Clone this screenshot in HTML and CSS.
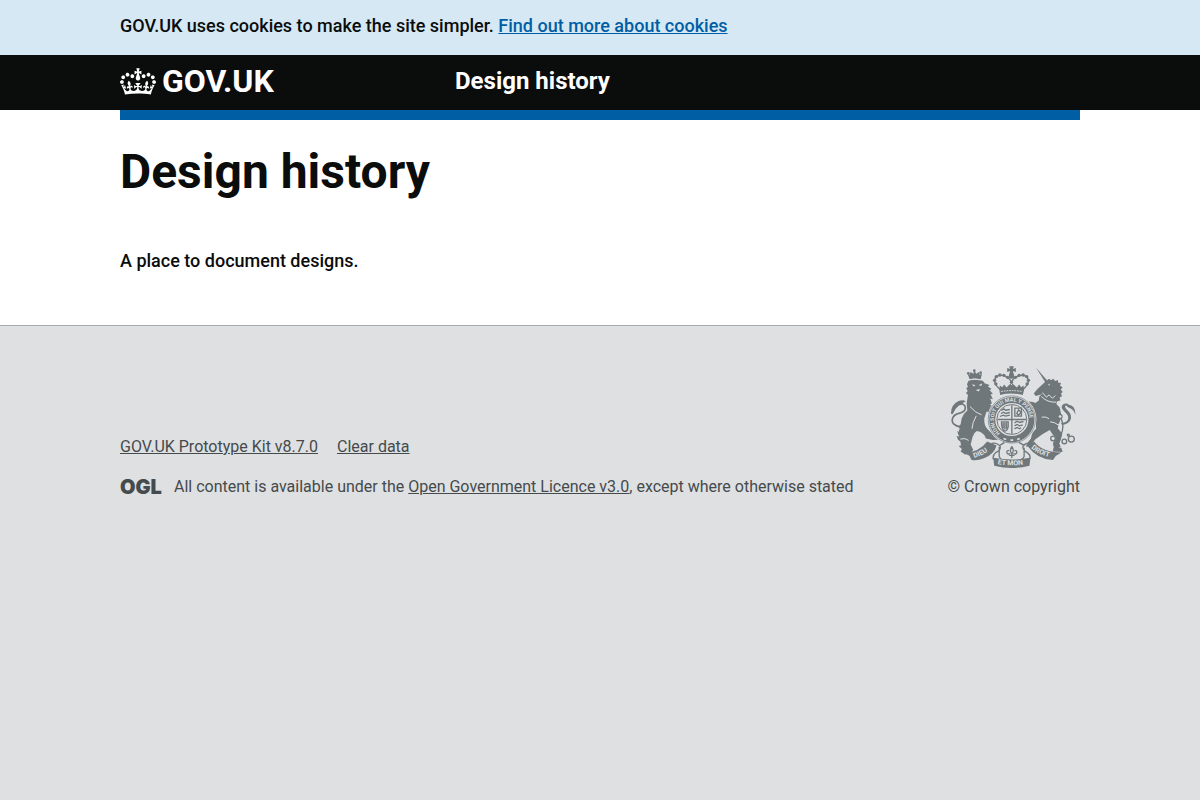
FILE: index.html
```html
<!DOCTYPE html>
<html lang="en">
<head>
<meta charset="utf-8">
<meta name="viewport" content="width=device-width, initial-scale=1">
<title>Design history</title>
<link rel="stylesheet" href="styles.css">
</head>
<body>
<div class="cookie-banner">
  <p class="container">GOV.UK uses cookies to make the site simpler. <a class="link" href="#cookies">Find out more about cookies</a></p>
</div>
<header class="header">
  <div class="container header-row">
    <a class="logo" href="#home">
      <svg class="crown" viewBox="0 0 132 97" aria-hidden="true"><path fill="currentColor" fill-rule="evenodd" d="M25 30.2c3.5 1.5 7.7-.2 9.1-3.7 1.5-3.6-.2-7.8-3.9-9.2-3.6-1.4-7.6.3-9.1 3.9-1.4 3.5.3 7.5 3.9 9zM9 39.5c3.6 1.5 7.8-.2 9.2-3.7 1.5-3.6-.2-7.8-3.9-9.1-3.6-1.5-7.6.2-9.1 3.8-1.4 3.5.3 7.5 3.8 9zM4.4 57.2c3.5 1.5 7.7-.2 9.1-3.8 1.5-3.6-.2-7.7-3.9-9.1-3.5-1.5-7.6.3-9.1 3.8-1.4 3.5.3 7.6 3.9 9.1zm38.3-21.4c3.5 1.5 7.7-.2 9.1-3.8 1.5-3.6-.2-7.7-3.9-9.1-3.6-1.5-7.6.3-9.1 3.8-1.3 3.6.4 7.7 3.9 9.1zm64.4-5.6c-3.6 1.5-7.8-.2-9.1-3.7-1.5-3.6.2-7.8 3.8-9.2 3.6-1.4 7.7.3 9.2 3.9 1.3 3.5-.4 7.5-3.9 9zm15.9 9.3c-3.6 1.5-7.7-.2-9.1-3.7-1.5-3.6.2-7.8 3.7-9.1 3.6-1.5 7.7.2 9.2 3.8 1.5 3.5-.3 7.5-3.8 9zm4.7 17.7c-3.6 1.5-7.8-.2-9.2-3.8-1.5-3.6.2-7.7 3.9-9.1 3.6-1.5 7.7.3 9.2 3.8 1.3 3.5-.4 7.6-3.9 9.1zM89.3 35.8c-3.6 1.5-7.8-.2-9.2-3.8-1.4-3.6.2-7.7 3.9-9.1 3.6-1.5 7.7.3 9.2 3.8 1.4 3.6-.3 7.7-3.9 9.1zM69.7 17.7l8.9 4.7V9.3l-8.9 2.8c-.2-.3-.5-.6-.9-.9L72.4 0H59.6l3.5 11.2c-.3.3-.6.5-.9.9l-8.8-2.8v13.1l8.8-4.7c.3.3.6.7.9.9l-5 15.4v.1c-.2.8-.4 1.6-.4 2.4 0 4.1 3.1 7.5 7 8.1h.2c.3 0 .7.1 1 .1.4 0 .7 0 1-.1h.2c4-.6 7.1-4.1 7.1-8.1 0-.8-.1-1.7-.4-2.4V34l-5.1-15.4c.4-.2.7-.6 1-.9zM66 92.8c16.9 0 32.8 1.1 47.1 3.2 4-16.9 8.9-26.7 14-33.5l-9.6-3.4c1 4.9 1.1 7.2 0 10.2-1.5-1.4-3-4.3-4.2-8.7L108.6 76c2.8-2 5-3.2 7.5-3.3-4.4 9.4-10 11.9-13.6 11.2-4.3-.8-6.3-4.6-5.6-7.9 1-4.7 5.7-5.9 8-.5 4.3-8.7-3-11.4-7.6-8.8 7.1-7.2 7.9-13.5 2.1-21.1-8 6.1-8.1 12.3-4.5 20.8-4.7-5.4-12.1-2.5-9.5 6.2 3.4-5.2 7.9-2 7.2 3.1-.6 4.3-6.4 7.8-13.5 7.2-10.3-.9-10.9-8-11.2-13.8 2.5-.5 7.1 1.8 11 7.3L80.2 60c-4.1 4.4-8 5.3-12.3 5.4 1.4-4.4 8-11.6 8-11.6H55.5s6.4 7.2 7.9 11.6c-4.2-.1-8-1-12.3-5.4l1.4 16.4c3.9-5.5 8.5-7.7 10.9-7.3-.3 5.8-.9 12.8-11.1 13.8-7.2.6-12.9-2.9-13.5-7.2-.7-5 3.8-8.3 7.1-3.1 2.7-8.7-4.6-11.6-9.4-6.2 3.7-8.5 3.6-14.7-4.6-20.8-5.8 7.6-5 13.9 2.2 21.1-4.7-2.6-11.9.1-7.7 8.8 2.3-5.5 7.1-4.2 8.1.5.7 3.3-1.3 7.1-5.7 7.9-3.5.7-9-1.8-13.5-11.2 2.5.1 4.7 1.3 7.5 3.3l-4.7-15.4c-1.2 4.4-2.7 7.2-4.3 8.7-1.1-3-.9-5.3 0-10.2l-9.5 3.4c5 6.9 9.9 16.7 14 33.5 14.8-2.1 30.8-3.2 47.7-3.2z"/></svg>
      <span>GOV.UK</span>
    </a>
    <a class="service-name" href="#service">Design history</a>
  </div>
</header>
<main class="container main">
  <h1 class="title">Design history</h1>
  <p>A place to document designs.</p>
</main>
<footer class="footer">
  <div class="container footer-row">
    <div class="footer-meta">
      <ul class="footer-links">
        <li><a href="#kit">GOV.UK Prototype Kit v8.7.0</a></li>
        <li><a href="#clear">Clear data</a></li>
      </ul>
      <div class="licence">
        <span class="ogl">OGL</span>
        <p>All content is available under the <a href="#licence">Open Government Licence v3.0</a>, except where otherwise stated</p>
      </div>
    </div>
    <a class="copyright" href="#copyright">
      <svg class="crest" viewBox="36 33 376 307" aria-hidden="true">
        <defs>
          <path id="garter" d="M184 235A54 54 0 1 1 254 235"/>
          <path id="left" d="M106 310Q138 300 162 277"/>
          <path id="mid" d="M176 328Q219 337 268 327"/>
          <path id="right" d="M277 280Q302 303 348 310"/>
        </defs>
        <g class="ink">
          <!-- lion -->
          <path d="M92 73l-6-17 6 3 3-8 8 5 3-9 6 9 8-5 2 8 7-3-4 17q-17-5-33 0z"/>
          <circle cx="106" cy="47" r="4"/><circle cx="88" cy="55" r="4"/><circle cx="125" cy="53" r="4"/>
          <path d="M91 77q15-6 34-2 10 3 12 10l15 5-5 5 11 7-6 3 10 12-7 1 7 15-8-2 5 15-6 2q14 8 20 20l12 8-7 9-14-3q-12-10-21-12l-7 21q-1 22 10 32 8 11 19 14l9 8 5 10-17 1-21-5q-5-13-16-19l-11-3q-10 5-13 17l-6 23 7 15-4 6 7 7-27 2-13-9 5-10-5-13 0-18-8-11 5-18-4-4 7-8 3-17q4-14 17-24l-2-22 4-25-6-6 5-5-4-10 5-3-3-8 5-11z"/>
          <path d="M71 238l-17-9 7 16-8-1 4 11 14 11zM72 270l-13 4 13 12 31 2-6-12z"/>
          <path class="line" d="M66 217Q36 211 40 193q3-14 22-18 21-6 16-21-7-13-20-4-14 11-20 27" stroke-width="5"/>
          <path d="M36 177q-1-28 23-39 14-5 22 2-12 3-14 11-3-2-11 1-7 4-12 20z"/>
          <!-- unicorn -->
          <path d="M292 38l36 42-7 4z"/>
          <path d="M319 81l12-10 6 5 7-5 5 7 9-3 0 8 9 1-3 8 8 6-6 5 6 8-5 5 3 9-7 2 2 10-9 2-3 8 10 11 4 18-3 22-7 22 14 17-4 16-5 13 4 10-17 2-5-6 8-24-10-9-9-13-21 12-23 16-9 13-10 9-9-1 7-13 8-10 5-18 11-12-1-22-6-15-13-7-8 10 4 9-9 9-11-5 4-12-4-10-9-13 5-9 8-6 10-3 9-8 11 1 8 3 10-7 2-13 8-6-19 5-6-7 11-14z"/>
          <path d="M367 205q22-2 22-16 0-9-12-19-13-12-5-20 10-7 19-1-9-1-12 6 0 5 9 13 14 14 7 28-8 13-25 14zM380 149q30-4 31 31-7-16-15-19-8-1-16-12z"/>
          <path d="M346 272l22 8 4 12-30-2z"/>
        </g>
        <g class="line" stroke-width="4">
          <path d="M366 190q10 17 5 38-4 17-14 27"/>
          <circle cx="398" cy="253" r="9"/><circle cx="377" cy="260" r="7"/><circle cx="389" cy="241" r="3"/>
          <circle cx="343" cy="251" r="7"/><circle cx="352" cy="267" r="7"/><circle cx="364" cy="185" r="6"/>
        </g>
        <g class="cut">
          <path d="M99 88l11 3-6 4zM119 90l11-4-3 7zM110 105l13-3-3 8zM327 90l7-4-2 6z"/>
          <path class="cutline" d="M88 75q18-5 38 0M93 155q17 20 35 25M112 183q-12 20-13 39M64 253q15-5 25 4M311 113l12 14 8-7 10 10 9-8M308 125q17 18 45 17M309 187q13-3 22 5M334 201q15 1 24 9" stroke-width="3"/>
          <circle cx="364" cy="185" r="4"/><circle cx="362" cy="210" r="4"/>
        </g>
        <!-- crown -->
        <path class="line" d="M184 104q-21-18-16-32 6-13 22-11 20 3 28 20 8-17 28-20 16-2 22 11 5 14-16 32" stroke-width="4"/>
        <g class="ink">
          <circle cx="171" cy="87" r="5"/><circle cx="167" cy="76" r="5"/><circle cx="172" cy="65" r="5"/><circle cx="183" cy="60" r="5"/><circle cx="195" cy="61" r="5"/><circle cx="206" cy="67" r="5"/>
          <circle cx="265" cy="87" r="5"/><circle cx="269" cy="76" r="5"/><circle cx="264" cy="65" r="5"/><circle cx="253" cy="60" r="5"/><circle cx="241" cy="61" r="5"/><circle cx="230" cy="67" r="5"/>
          <path d="M211 34h14l-3 8 9-3v12l-9-3 3 12h-14l3-12-9 3V39l9 3z"/>
          <circle cx="218" cy="63" r="8"/><circle cx="218" cy="82" r="5"/>
          <path d="M181 104l2-12 7 5 6-8 7 9 12-12 3 6 3-6 13 12 7-9 6 8 7-5 2 12-4 16q-35-8-68 0z"/>
        </g>
        <path class="cutline" d="M187 110q32-6 63 0" stroke-width="3" stroke-dasharray="5 3"/>
        <!-- garter and shield -->
        <circle class="field" cx="219" cy="194" r="74"/>
        <circle class="line" cx="219" cy="194" r="59" stroke-width="18"/>
        <circle class="line" cx="219" cy="194" r="71" stroke-width="2"/>
        <circle class="line" cx="219" cy="194" r="45" stroke-width="3"/>
        <path class="line" d="M219 151v86M176 194h86" stroke-width="4"/>
        <g class="line" stroke-width="4">
          <path d="M187 167l8-5 5 4 13-2M186 176l8-4 6 4 13-3M183 185l10-4 7 3 13-3M228 160h20v24h-20zM234 176l5-11 8 7-8 9zM227 204l8-5 7 4 12-3M227 213l8-4 7 4 10-3M227 222l8-4 7 4 5-3M188 201l20 0 0 15q-3 12-10 13-11-5-10-28zM193 204v16M198 204v20M203 204v18"/>
        </g>
        <path class="line" d="M178 245q39 32 81 0M197 263l-13 8M240 263l15 8" stroke-width="4"/>
        <path class="cutline" d="M194 251l8 3M215 256h8M235 254l8-3" stroke-width="5"/>
        <!-- scroll -->
        <g class="ink">
          <path d="M76 294q44-1 69-34l28 12q-7 26-38 39-24 9-38 4l-5-11z"/>
          <path d="M286 260q23 32 82 33l-17 11-8 12q-47-2-75-40z"/>
          <path d="M163 309q54 11 112 0l-3 24q-54 14-106 0z"/>
        </g>
        <path class="line" d="M158 266q14-4 25 7 5 13-13 21-9 7-7 20M278 266q-18-3-25 8-4 10 15 22 8 6 5 16M181 277v28q2 7 7 8M256 279v26q-2 7-8 8" stroke-width="4"/>
        <path class="line" d="M219 276q9 12 0 21-9-9 0-21zM214 297q-9 3-10-4 0-7 7-5M224 297q9 3 10-4 0-7-7-5M219 297v13M211 302h16" stroke-width="4"/>
        <g class="motto">
          <text><textPath href="#garter">HONI SOIT QUI MAL Y PENSE</textPath></text>
          <text class="motto-large"><textPath href="#left">DIEU</textPath></text>
          <text class="motto-large"><textPath href="#mid">ET MON</textPath></text>
          <text class="motto-large"><textPath href="#right">DROIT</textPath></text>
        </g>
      </svg>
      <span>© Crown copyright</span>
    </a>
  </div>
</footer>
</body>
</html>
```
FILE: styles.css
```css
* { box-sizing: border-box; }

html { background: #dee0e2; }

body {
  margin: 0;
  color: #0b0c0c;
  background: #fff;
  font-family: Roboto, "Liberation Sans", sans-serif;
  font-size: 18px;
  font-weight: 500;
  line-height: 25px;
}

p, h1, ul { margin: 0; padding: 0; }

.container {
  max-width: 960px;
  margin: 0 auto;
}

.cookie-banner {
  padding: 13px 30px 17px;
  background: #d5e8f3;
}

.link { color: #005ea5; }

.header {
  height: 55px;
  padding: 0 30px;
  background: #0b0c0c;
}

.header-row {
  display: grid;
  grid-template-columns: 335px 1fr;
  align-items: center;
  height: 65px;
  padding-bottom: 3px;
  border-bottom: 10px solid #005ea5;
}

.header a {
  color: #fff;
  font-weight: 700;
  text-decoration: none;
}

.logo {
  display: flex;
  align-items: center;
  gap: 6px;
  font-size: 32px;
  line-height: 32px;
}

.crown { width: 36px; height: 27px; }

.service-name { font-size: 24px; }

.main { padding: 37px 0 52px; }

.title {
  margin-bottom: 51px;
  font-size: 48px;
  line-height: 50px;
}

.footer {
  padding: 40px 30px 25px;
  border-top: 1px solid #a1acb2;
  background: #dee0e2;
  color: #454a4c;
  font-size: 16px;
  font-weight: 400;
  line-height: 20px;
}

.footer a { color: inherit; }

.footer-row {
  display: flex;
  justify-content: space-between;
  align-items: flex-end;
}

.footer-links {
  display: flex;
  gap: 19px;
  margin-bottom: 20px;
  list-style: none;
}

.licence {
  display: flex;
  align-items: center;
  gap: 13px;
}

.ogl {
  width: 41px;
  font-family: Inter, sans-serif;
  font-size: 20px;
  font-weight: 900;
}

.footer .copyright {
  display: flex;
  flex-direction: column;
  align-items: center;
  gap: 9px;
  text-decoration: none;
}

.crest { width: 125px; height: 102px; }

.ink { fill: #6f777b; }
.field, .cut { fill: #dee0e2; }
.line { fill: none; stroke: #6f777b; }
.cutline { fill: none; stroke: #dee0e2; }

.motto {
  fill: #dee0e2;
  font-family: Roboto, sans-serif;
  font-size: 16px;
  font-weight: 700;
}

.motto-large { font-size: 21px; }
```
